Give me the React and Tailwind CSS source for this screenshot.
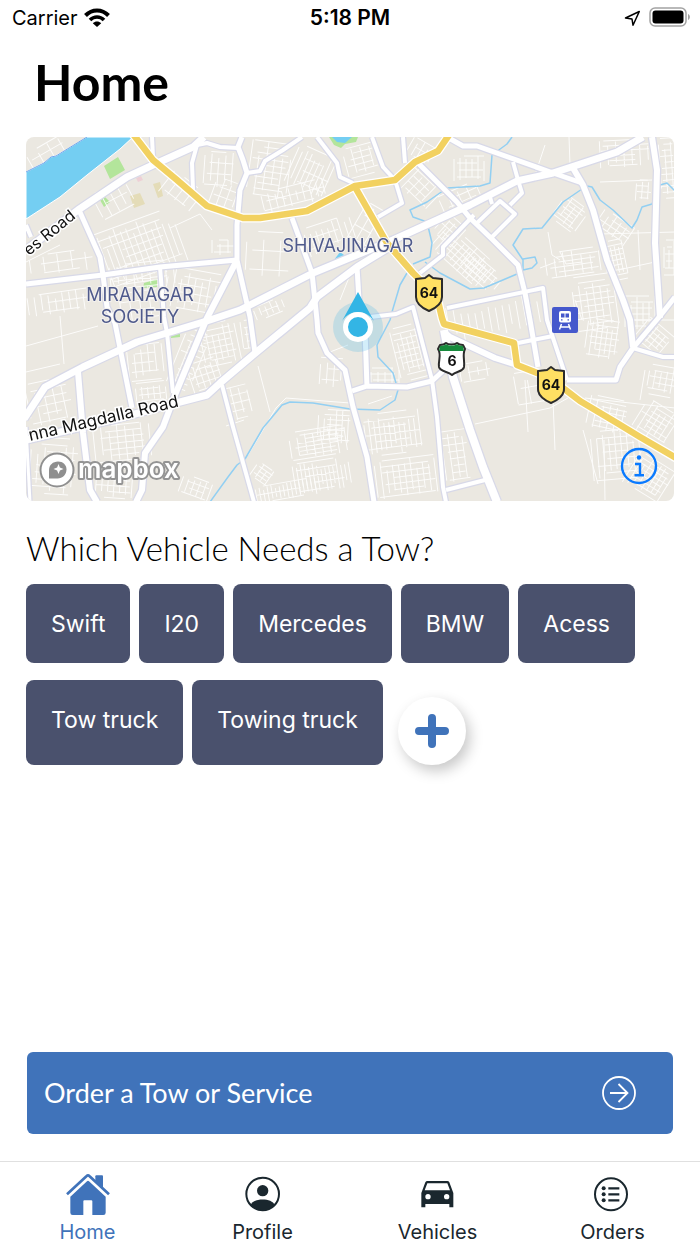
import React from "react";

const roads = [
  { w: 5, d: "M242 137L238 147L243 160L247 173L240 190L237 225L237 260L250 317L255 353" },
  { w: 4, d: "M247 173L260 171L265 161L283 150L302 137" },
  { w: 4, d: "M197 145L192 163L193 190" },
  { w: 4, d: "M197 145L207 143L220 147L238 148" },
  { w: 4, d: "M152 137L153 158" },
  { w: 5, d: "M26 284L103 275L160 267L237 260" },
  { w: 5, d: "M79 210L100 257L103 275L107 307L115 323L132 408" },
  { w: 4, d: "M160 267L164 317L167 333L173 393" },
  { w: 6, d: "M237 260L207 318L175 395L163 427L145 453L142 490L136 502" },
  { w: 7, d: "M26 250L78 210L127 177L153 165L193 147L204 137" },
  { w: 4, d: "M26 225L31 237" },
  { w: 6, d: "M78 372L83 433L90 490L97 502" },
  { w: 4, d: "M222 385L233 427L254 502" },
  { w: 3, d: "M26 427L30 502" },
  { w: 5, d: "M292 218L312 273L317 320L318 333L327 353L345 370L353 407L367 457L374 502" },
  { w: 4, d: "M317 137L337 163L340 177L353 183" },
  { w: 4, d: "M372 137L383 167L395 180L402 203L378 217" },
  { w: 4, d: "M403 137L405 163" },
  { w: 5, d: "M417 162L457 202L470 218L493 240L518 265L525 293L530 320L538 367" },
  { w: 4, d: "M474 215L443 247L443 255L420 273" },
  { w: 5, d: "M447 137L463 146L477 146L553 173L582 183" },
  { w: 6, d: "M573 168L583 185L593 210L607 260L623 300L630 320L633 347" },
  { w: 6, d: "M652 137L657 170L655 243L660 318" },
  { w: 5, d: "M675 297L660 316L633 348L620 367L616 380L604 380L567 380" },
  { w: 4, d: "M633 348L663 357L675 357" },
  { w: 4, d: "M513 162L518 180L522 193L510 205" },
  { w: 4, d: "M477 223L500 201L515 214L492 237M490 197L492 204" },
  { w: 4, d: "M447 308L543 288L547 320L567 380" },
  { w: 4, d: "M518 343L553 336" },
  { w: 4, d: "M370 317L396 314L413 307L432 380L437 417L443 487L446 502" },
  { w: 5, d: "M365 330L367 387M352 391L367 386L407 387L432 381L444 370" },
  { w: 5, d: "M357 267L359 300" },
  { w: 8, d: "M444 330L453 377L470 430L483 467L497 502" },
  { w: 6, d: "M444 332L450 337L495 358L517 365" },
  { w: 4, d: "M446 490L485 480" },
  { w: 7, d: "M26 440L120 418L180 402L207 395L220 383L253 355L310 308L317 297L357 267L393 245" },
  { w: 7, d: "M24 419L45 387L83 367L137 342L210 320L240 310L313 273L393 240L470 205L517 181L553 173L617 152L643 137" },
];

const streams = [
  "M512 137L507 144L492 155L490 183L480 186L447 188L427 202L410 210L413 217L427 222L432 243L430 257L413 264",
  "M425 262L440 273L470 289L484 288L517 274",
  "M407 273L400 285L392 312L390 320L377 345L378 357L393 373L398 390L395 400L380 410L350 409L313 403L290 402L282 405L263 428L245 459L237 465L228 477L210 502",
  "M582 189L563 202L542 228L523 229L513 245L523 260L523 270L532 268L537 263L535 257L523 259",
  "M587 186L592 187L600 200L613 210L632 228L637 220L642 207L652 204L660 185L667 183L675 191",
];

/* x, y, width, height, angle, column gap, row gap */
const blocks = [
  [98, 220, 84, 62, -20, 6, 8],
  [110, 262, 70, 26, -6, 8, 8],
  [28, 142, 45, 22, -30, 12, 8],
  [96, 185, 36, 30, -28, 9, 14],
  [162, 180, 42, 28, 38, 9, 11],
  [204, 152, 30, 38, 4, 7, 11],
  [212, 180, 26, 30, 20, 8, 9],
  [249, 142, 42, 58, 8, 8, 6],
  [290, 150, 42, 44, 24, 5, 12],
  [262, 185, 66, 22, -14, 7, 9],
  [345, 145, 34, 30, -15, 9, 6],
  [408, 142, 28, 20, 30, 6, 9],
  [300, 222, 54, 30, -18, 6, 11],
  [246, 232, 46, 50, 3, 17, 19],
  [354, 205, 26, 48, 30, 9, 13],
  [400, 170, 42, 32, 44, 8, 7],
  [432, 240, 60, 32, 42, 6, 5],
  [436, 218, 26, 28, 42, 6, 6],
  [460, 262, 42, 20, 40, 6, 5],
  [454, 156, 32, 26, 0, 6, 7],
  [440, 188, 40, 20, -24, 10, 7],
  [600, 140, 50, 28, -3, 8, 5],
  [660, 138, 16, 60, -4, 6, 6],
  [636, 180, 16, 22, 4, 6, 6],
  [556, 200, 28, 28, 36, 7, 4],
  [596, 218, 40, 22, 34, 7, 6],
  [546, 250, 54, 28, -8, 9, 5],
  [574, 275, 42, 56, -8, 7, 6],
  [605, 240, 22, 40, -12, 4, 5],
  [625, 296, 30, 34, 0, 6, 6],
  [664, 240, 12, 36, 0, 5, 7],
  [448, 300, 92, 36, -10, 7, 99],
  [586, 320, 34, 40, 8, 5, 6],
  [638, 325, 34, 26, 40, 6, 5],
  [648, 366, 28, 30, 10, 6, 6],
  [588, 398, 40, 34, 12, 7, 5],
  [592, 430, 48, 50, -5, 6, 7],
  [636, 405, 38, 38, 32, 6, 5],
  [628, 460, 44, 38, 32, 5, 5],
  [516, 370, 38, 38, -10, 13, 16],
  [460, 362, 32, 18, -10, 9, 9],
  [444, 430, 26, 60, -8, 7, 7],
  [395, 325, 32, 54, -14, 5, 6],
  [364, 368, 36, 18, 0, 7, 6],
  [320, 358, 26, 30, 4, 7, 11],
  [360, 412, 62, 42, -7, 5, 7],
  [376, 458, 62, 40, -7, 6, 6],
  [318, 410, 34, 34, 3, 6, 5],
  [290, 428, 62, 30, -9, 8, 4],
  [294, 460, 56, 32, -9, 4, 7],
  [256, 482, 62, 18, -10, 4, 8],
  [252, 466, 22, 18, 35, 6, 4],
  [242, 320, 14, 32, -8, 5, 7],
  [176, 330, 26, 60, 22, 8, 6],
  [202, 322, 38, 44, -12, 6, 6],
  [190, 360, 32, 32, -18, 6, 7],
  [226, 386, 26, 36, -14, 8, 8],
  [128, 344, 36, 38, -6, 7, 9],
  [136, 382, 30, 22, -6, 6, 6],
  [94, 418, 60, 46, -6, 8, 6],
  [96, 468, 40, 32, 4, 6, 6],
  [30, 438, 48, 60, 4, 7, 7],
  [28, 380, 44, 44, -12, 9, 8],
  [28, 292, 62, 22, -8, 7, 9],
  [30, 252, 66, 22, -8, 14, 9],
  [166, 270, 54, 42, 10, 7, 8],
  [120, 282, 42, 42, -8, 10, 9],
  [180, 478, 30, 22, 20, 6, 6],
  [254, 302, 30, 14, -22, 6, 7],
  [212, 240, 24, 16, 0, 8, 6],
];

const lanes =
  "M26 346L98 326M60 316L64 364M26 372L60 364M352 270L340 300M330 352L348 345M248 455L276 408L286 398L350 403M368 404L392 396M475 424L550 408L568 398M525 380L528 432M545 145L535 175M569 137L570 165M548 232L552 255L560 260M575 300L582 320M600 182L652 180M638 230L640 270M600 234L675 232M618 270L655 262M585 398L675 408M604 440L605 500M583 430L598 484M540 268L556 262M553 400L555 450M26 262L60 245M560 252L566 264L582 262M630 320L675 320M645 370L640 400M170 228L200 214L212 230M244 420L226 426M258 366L270 412";

function blockPath([, , w, h, , dx, dy], seed) {
  let d = "";
  let s = seed * 7919 + 13;
  const rnd = () => {
    s = (s * 1103515245 + 12345) % 2147483648;
    return s / 2147483648;
  };
  for (let x = 0; x <= w; x += dx) {
    const a = Math.floor(rnd() * h * 0.3);
    const b = Math.floor(h - rnd() * h * 0.25);
    d += `M${x} ${a}V${b}`;
  }
  for (let y = 0; y <= h; y += dy) {
    const a = Math.floor(rnd() * w * 0.35);
    const b = Math.floor(w - rnd() * w * 0.3);
    d += `M${a} ${y}H${b}`;
  }
  return d;
}

const trunk =
  "M133 134L153 160L177 180L207 206L243 218L260 218L307 211L355 186L395 180L415 162L438 151L449 135";
const trunkBranch =
  "M355 187L387 243L413 273L437 297L442 318L444 324L470 331L514 343L517 365L550 378L580 401L617 423L640 437L676 458";

const halo = { paintOrder: "stroke" };

function Shield64({ x, y }) {
  return (
    <g transform={`translate(${x} ${y})`}>
      <path
        d="M0 -18L4 -15L13 -14V4C13 11 7 15 0 18C-7 15 -13 11 -13 4V-14L-4 -15Z"
        fill="#ffe063"
        stroke="#2b2b2b"
        strokeWidth="2"
        strokeLinejoin="round"
      />
      <text y="5" textAnchor="middle" className="font-['Inter'] text-[14px] font-bold" fill="#111">
        64
      </text>
    </g>
  );
}

function CityMap() {
  return (
    <svg viewBox="26 137 648 364" className="block h-auto w-full" role="img" aria-label="Map of your location">
      <rect x="26" y="137" width="648" height="364" fill="#ebe8e1" />
      <g fill="#b3e59b">
        <path d="M104 166L118 157L125 170L110 179Z" />
        <path d="M100 200L105 197L110 202L104 207Z" />
        <path d="M144 283L157 279L157 287L143 288Z" />
        <path d="M171 334L180 333L180 337L171 338Z" />
        <path d="M329 137L334 145L341 148L345 144L356 142L358 137Z" />
      </g>
      <path d="M332 137L337 142L345 143L352 137Z" fill="#74cef2" />
      <path d="M334 260L340 252L348 258Z" fill="#74cef2" />
      <path d="M130 196L140 193L145 204L134 208Z" fill="#e4dcb8" />
      <path d="M153 184L160 182L163 196L158 198Z" fill="#e4dcb8" />
      <path d="M136 178L141 176L143 180L138 182Z" fill="#eed0d6" />
      <g fill="none" stroke="#fff" strokeWidth="1" opacity="0.85">
        {blocks.map((b, i) => (
          <path
            key={i}
            d={blockPath(b, i + 1)}
            transform={`translate(${b[0]} ${b[1]}) rotate(${b[4]} ${b[2] / 2} ${b[3] / 2})`}
          />
        ))}
        <path d={lanes} />
      </g>
      <path d="M26 172L44 163L51 157L56 156L87 137H133L120 149L87 175L60 197L26 219Z" fill="#74cef2" stroke="#fff" />
      <path d="M26 172L44 163L51 157L56 156L87 137" fill="none" stroke="#6fa5ec" />
      <g fill="none" stroke="#92cff2" strokeWidth="1.5" strokeLinejoin="round">
        {streams.map((d) => (
          <path key={d} d={d} />
        ))}
      </g>
      <g fill="none" stroke="#d8d9e8" strokeLinejoin="round">
        {roads.map((r) => (
          <path key={r.d} d={r.d} strokeWidth={r.w + 2.5} />
        ))}
      </g>
      <g fill="none" stroke="#fff" strokeLinejoin="round">
        {roads.map((r) => (
          <path key={r.d} d={r.d} strokeWidth={r.w} />
        ))}
      </g>
      <g fill="none" strokeLinejoin="round">
        <path d={trunk} stroke="#fff" strokeWidth="9" />
        <path d={trunkBranch} stroke="#fff" strokeWidth="9" />
        <path d={trunk} stroke="#f2d160" strokeWidth="6.5" />
        <path d={trunkBranch} stroke="#f2d160" strokeWidth="6.5" />
      </g>

      <g
        className="font-['Inter'] text-[18px]"
        fill="#4f5a8c"
        stroke="#f3f1ee"
        strokeWidth="2"
        textAnchor="middle"
        style={halo}
      >
        <text x="348" y="252">SHIVAJINAGAR</text>
        <text x="140" y="301">MIRANAGAR</text>
        <text x="140" y="323">SOCIETY</text>
      </g>
      <g className="font-['Inter'] text-[17px]" fill="#111" stroke="#fff" strokeWidth="3" style={halo}>
        <text transform="translate(30 441) rotate(-13)">nna Magdalla Road</text>
        <text transform="translate(29 256) rotate(-39)" className="text-[16px]">es Road</text>
      </g>

      <Shield64 x={429} y={293} />
      <Shield64 x={551} y={385} />
      <path
        d="M440 345C443 345 445 344 446 343C448 345 455 345 457 343C458 344 460 345 463 345L465 349C462 355 465 360 464 367C463 372 456 371 452 375C448 371 440 372 439 367C438 360 442 355 438 349Z"
        fill="#fff"
        stroke="#2b2b2b"
        strokeWidth="2"
        strokeLinejoin="round"
      />
      <path d="M440 346C443 346 445 345 446 344C448 346 455 346 457 344C458 345 460 346 463 346L464 351H439Z" fill="#178a3c" />
      <text x="452" y="366" textAnchor="middle" className="font-['Inter'] text-[14px] font-bold" fill="#111">
        6
      </text>

      <rect x="552" y="307" width="26" height="26" rx="2" fill="#4558cc" />
      <rect x="559" y="311" width="12" height="11.500" rx="2" fill="#fff" />
      <path d="M561 313.500h3.500v4h-3.500zM565.500 313.500h3.500v4h-3.500zM561 319.200h1.500v1.300h-1.500zM567.500 319.200h1.500v1.300h-1.500z" fill="#4558cc" />
      <path d="M561.500 324L559.500 329.500M568.500 324L570.500 329.500M560.500 327H569.500" fill="none" stroke="#fff" strokeWidth="1.500" />

      <circle cx="358" cy="327" r="25" fill="#35b3e6" opacity="0.22" />
      <path d="M358 292L374 321C366 309 350 309 342 321Z" fill="#33b5e5" />
      <circle cx="358" cy="327" r="12.5" fill="#33b5e5" stroke="#fff" strokeWidth="5" />
    </svg>
  );
}

function MapboxLogo() {
  return (
    <svg width="146" height="38" viewBox="38 450 146 38" aria-hidden="true">
      <circle cx="57" cy="469" r="16.5" fill="#fff" stroke="#8f8f8f" strokeWidth="2" />
      <path d="M49 477.500V469C49 464 53 460.500 58 460.500C63 460.500 66.500 464 66.500 468.500C66.500 473.500 62.500 477.500 57.500 477.500Z" fill="#8f8f8f" />
      <path d="M58.500 463L59.900 466.600L63.500 468L59.900 469.400L58.500 473L57.100 469.400L53.500 468L57.100 466.600Z" fill="#fff" />
      <text
        x="78"
        y="477"
        className="font-['Inter'] text-[26px] font-semibold"
        fill="#fff"
        stroke="#949494"
        strokeWidth="4"
        strokeLinejoin="round"
        style={halo}
      >
        mapbox
      </text>
    </svg>
  );
}

function StatusBar() {
  return (
    <header className="grid h-9 grid-cols-3 items-center px-3 font-['Inter',sans-serif] text-[20px] leading-6">
      <div className="flex items-center gap-1.5">
        <span>Carrier</span>
        <svg width="26" height="20" viewBox="0 0 26 20" aria-label="Wi-Fi">
          <g fill="none" stroke="#000">
            <path d="M1.500 7.500C8 0.800 18 0.800 24.500 7.500" strokeWidth="4" />
            <path d="M6 12C10 8 16 8 20 12" strokeWidth="3.600" />
          </g>
          <path d="M13 19L8.800 15.200C11.200 13 14.800 13 17.200 15.200Z" />
        </svg>
      </div>
      <span className="text-center text-[21px] font-semibold">5:18 PM</span>
      <div className="flex items-center justify-end gap-2">
        <svg width="17" height="17" viewBox="0 0 17 17" aria-label="Location in use">
          <path d="M1.500 8L15.300 1.500L9 15.200L8 9Z" fill="none" stroke="#000" strokeWidth="1.500" strokeLinejoin="round" />
        </svg>
        <svg width="39" height="20" viewBox="0 0 39 20" className="overflow-visible" aria-label="Battery full">
          <rect x="1" y="0" width="36" height="18" rx="5" fill="none" stroke="#a3a3a3" strokeWidth="1.500" />
          <rect x="3.500" y="2.500" width="31" height="13" rx="3" />
          <path d="M39 6C41.500 7 41.500 11 39 12Z" fill="#a3a3a3" />
        </svg>
      </div>
    </header>
  );
}

function HomeIcon() {
  return (
    <svg width="44" height="44" viewBox="0 0 132 132" fill="currentColor" aria-hidden="true">
      <path d="M88 10Q88 7 91 7H108Q111 7 111 10V46L88 25Z" />
      <path d="M3 64L62 9Q66 5 70 9L129 64" fill="none" stroke="currentColor" strokeWidth="8" />
      <path d="M13 71L63 25Q66 22 69 25L119 71V119Q119 126 112 126H79V85Q79 82 76 82H55Q52 82 52 85V126H20Q13 126 13 119Z" />
    </svg>
  );
}

function ProfileIcon() {
  return (
    <svg width="44" height="44" viewBox="0 0 132 132" fill="currentColor" aria-hidden="true">
      <circle cx="65" cy="63" r="49" fill="none" stroke="currentColor" strokeWidth="6" />
      <circle cx="65" cy="53" r="17" />
      <path d="M29 96C37 74 93 74 101 96C83 117 47 117 29 96Z" />
    </svg>
  );
}

function CarIcon() {
  return (
    <svg width="44" height="44" viewBox="2 0 132 132" fill="currentColor" fillRule="evenodd" aria-hidden="true">
      <path d="M36 24H96Q100 24 102 28L114 60V103H102V93H30V103H18V60L30 28Q32 24 36 24ZM36 31L28 52H104L96 31ZM38 63A8 8 0 1 0 38 79A8 8 0 1 0 38 63ZM94 63A8 8 0 1 0 94 79A8 8 0 1 0 94 63Z" />
    </svg>
  );
}

function OrdersIcon() {
  return (
    <svg width="44" height="44" viewBox="6 0 132 132" fill="currentColor" aria-hidden="true">
      <circle cx="66" cy="64" r="48" fill="none" stroke="currentColor" strokeWidth="6" />
      <circle cx="44" cy="46" r="6" />
      <circle cx="44" cy="64" r="6" />
      <circle cx="44" cy="82" r="6" />
      <path d="M58 46H91M58 64H91M58 82H91" stroke="currentColor" strokeWidth="7" />
    </svg>
  );
}

const vehicles = ["Swift", "I20", "Mercedes", "BMW", "Acess", "Tow truck", "Towing truck"];

const tabs = [
  { label: "Home", Icon: HomeIcon, active: true },
  { label: "Profile", Icon: ProfileIcon },
  { label: "Vehicles", Icon: CarIcon },
  { label: "Orders", Icon: OrdersIcon },
];

export default function App() {
  return (
    <div className="flex min-h-screen flex-col bg-white text-black">
      <StatusBar />
      <main className="flex flex-1 flex-col px-[26px]">
        <h1 className="mt-[14px] px-2 font-['Lato',sans-serif] text-[50px] font-bold leading-[64px]">Home</h1>

        <div className="relative mt-[23px] overflow-hidden rounded-lg">
          <CityMap />
          <a href="#mapbox" aria-label="Mapbox" className="absolute bottom-3 left-3">
            <MapboxLogo />
          </a>
          <button type="button" aria-label="Map information" className="absolute right-4 bottom-4 text-[#0a7aff]">
            <svg width="38" height="38" viewBox="0 0 38 38" fill="none" stroke="currentColor" strokeWidth="2.400">
              <circle cx="19" cy="19" r="17" />
              <path d="M15 17H20V28M14.500 28.300H24" />
              <circle cx="19" cy="10.500" r="2.200" fill="currentColor" stroke="none" />
            </svg>
          </button>
        </div>

        <h2 className="mt-6 font-['Lato',sans-serif] text-[33px] font-light leading-[46px]">
          Which Vehicle Needs a Tow?
        </h2>

        <div className="mt-[13px] flex flex-wrap gap-x-[9px] gap-y-[17px] font-['Inter',sans-serif] text-[23px] leading-7 text-white">
          {vehicles.map((name) => (
            <button key={name} type="button" className="flex items-start rounded-lg bg-[#4a516d] px-[25px] pt-[26px] pb-[25px]">
              {name}
            </button>
          ))}
          <button
            type="button"
            aria-label="Add vehicle"
            className="mt-[17px] ml-1.5 flex size-[68px] items-center justify-center rounded-full bg-white text-[#4073ba] shadow-[4px_6px_14px_rgba(0,0,0,0.22)]"
          >
            <svg width="34" height="34" viewBox="0 0 34 34" stroke="currentColor" strokeWidth="8" strokeLinecap="round">
              <path d="M17 4V30M4 17H30" />
            </svg>
          </button>
        </div>

        <button
          type="button"
          className="mx-px mt-auto mb-[27px] flex h-[82px] items-center justify-between rounded-md bg-[#4073ba] pr-9 pl-[17px] font-['Lato',sans-serif] text-[27px] text-white"
        >
          <span>Order a Tow or Service</span>
          <svg width="36" height="36" viewBox="0 0 36 36" fill="none" stroke="currentColor" strokeWidth="1.800">
            <circle cx="18" cy="18" r="16" />
            <path d="M9 18H26.500M17.500 9L26.500 18L17.500 27" />
          </svg>
        </button>
      </main>

      <nav className="grid grid-cols-4 border-t border-[#e0e0e0] pt-[11px] font-['Inter',sans-serif] text-[20px] leading-6">
        {tabs.map(({ label, Icon, active }) => (
          <a
            key={label}
            href={"#" + label.toLowerCase()}
            aria-current={active ? "page" : undefined}
            className={
              active
                ? "flex flex-col items-center gap-[3px] text-[#4073ba]"
                : "flex flex-col items-center gap-[3px] text-[#1a272e]"
            }
          >
            <Icon />
            <span>{label}</span>
          </a>
        ))}
      </nav>
    </div>
  );
}
